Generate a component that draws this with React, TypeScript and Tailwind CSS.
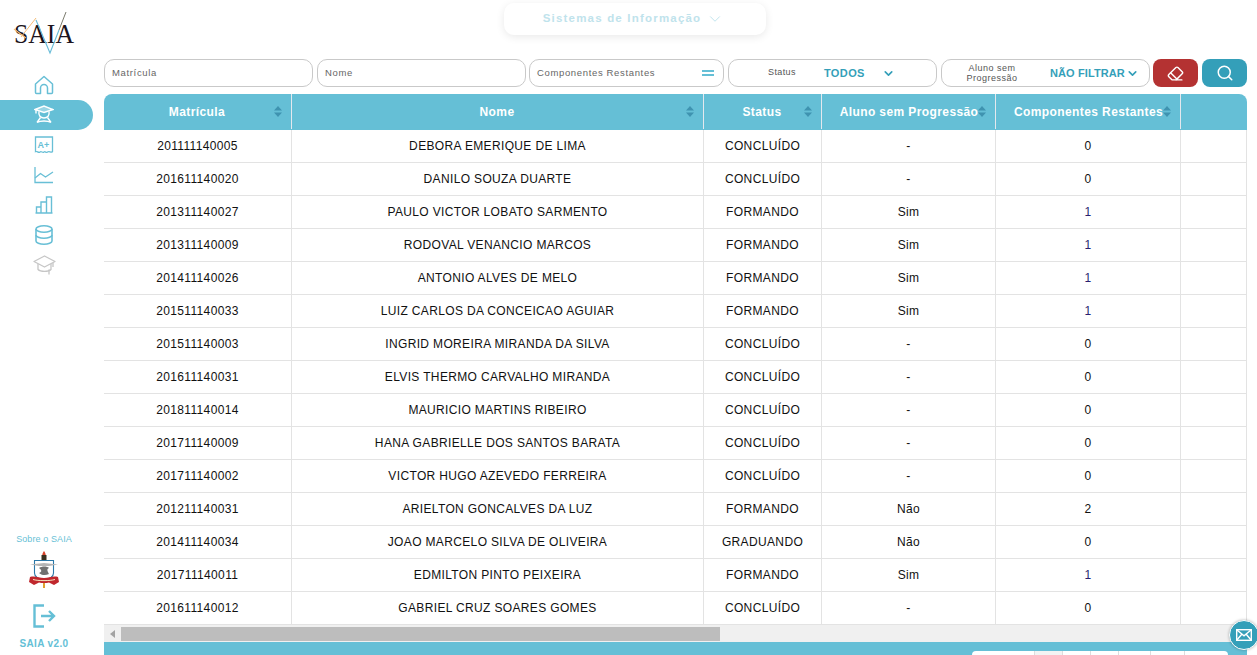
import { ChevronDown, Eraser, Search } from "lucide-react";

interface Student {
  matricula: string;
  nome: string;
  status: string;
  semProgressao: string;
  restantes: number;
}

const students: Student[] = [
  { matricula: "201111140005", nome: "DEBORA EMERIQUE DE LIMA", status: "CONCLUÍDO", semProgressao: "-", restantes: 0 },
  { matricula: "201611140020", nome: "DANILO SOUZA DUARTE", status: "CONCLUÍDO", semProgressao: "-", restantes: 0 },
  { matricula: "201311140027", nome: "PAULO VICTOR LOBATO SARMENTO", status: "FORMANDO", semProgressao: "Sim", restantes: 1 },
  { matricula: "201311140009", nome: "RODOVAL VENANCIO MARCOS", status: "FORMANDO", semProgressao: "Sim", restantes: 1 },
  { matricula: "201411140026", nome: "ANTONIO ALVES DE MELO", status: "FORMANDO", semProgressao: "Sim", restantes: 1 },
  { matricula: "201511140033", nome: "LUIZ CARLOS DA CONCEICAO AGUIAR", status: "FORMANDO", semProgressao: "Sim", restantes: 1 },
  { matricula: "201511140003", nome: "INGRID MOREIRA MIRANDA DA SILVA", status: "CONCLUÍDO", semProgressao: "-", restantes: 0 },
  { matricula: "201611140031", nome: "ELVIS THERMO CARVALHO MIRANDA", status: "CONCLUÍDO", semProgressao: "-", restantes: 0 },
  { matricula: "201811140014", nome: "MAURICIO MARTINS RIBEIRO", status: "CONCLUÍDO", semProgressao: "-", restantes: 0 },
  { matricula: "201711140009", nome: "HANA GABRIELLE DOS SANTOS BARATA", status: "CONCLUÍDO", semProgressao: "-", restantes: 0 },
  { matricula: "201711140002", nome: "VICTOR HUGO AZEVEDO FERREIRA", status: "CONCLUÍDO", semProgressao: "-", restantes: 0 },
  { matricula: "201211140031", nome: "ARIELTON GONCALVES DA LUZ", status: "FORMANDO", semProgressao: "Não", restantes: 2 },
  { matricula: "201411140034", nome: "JOAO MARCELO SILVA DE OLIVEIRA", status: "GRADUANDO", semProgressao: "Não", restantes: 0 },
  { matricula: "201711140011", nome: "EDMILTON PINTO PEIXEIRA", status: "FORMANDO", semProgressao: "Sim", restantes: 1 },
  { matricula: "201611140012", nome: "GABRIEL CRUZ SOARES GOMES", status: "CONCLUÍDO", semProgressao: "-", restantes: 0 },
];

const gridCols = "grid grid-cols-[188px_412px_118px_174px_185px_66px]";

function SortIcon() {
  return (
    <svg width="8" height="11" viewBox="0 0 8 11" className="shrink-0" fill="#3f93b0">
      <path d="M4 0 8 4.5H0Z" />
      <path d="M4 11 0 6.5H8Z" />
    </svg>
  );
}

function Logo() {
  return (
    <svg width="70" height="46" viewBox="0 0 70 46">
      <text x="3" y="33" fontFamily="Liberation Serif, serif" fontSize="27" fill="#1c1420" textLength="60" lengthAdjust="spacingAndGlyphs">
        SAIA
      </text>
      <path d="M3 19 15 28" stroke="#f5bd78" strokeWidth="1.2" />
      <path d="M10 27 25 8" stroke="#f5bd78" strokeWidth="1" />
      <path d="M25 10 39 43 48 20" stroke="#68bcd8" strokeWidth="1.1" fill="none" />
      <path d="M48 20 55 2" stroke="#6b6b5c" strokeWidth="0.9" />
    </svg>
  );
}

function HouseIcon() {
  return (
    <svg width="20" height="20" viewBox="0 0 20 20" fill="none" stroke="#68bfd6" strokeWidth="1.5" strokeLinejoin="round">
      <path d="M1.5 9 10 1.5 18.5 9V17.5A1 1 0 0 1 17.5 18.5H13.5V13A3.5 3.5 0 0 0 6.5 13V18.5H2.5A1 1 0 0 1 1.5 17.5Z" />
    </svg>
  );
}

function StudentIcon() {
  return (
    <svg width="20" height="20" viewBox="0 0 20 20" fill="none" stroke="#fff" strokeWidth="1.4">
      <path d="M1 4.5 10 1 19 4.5 10 7.5Z" fill="#fff" fillOpacity="0.35" />
      <path d="M2 5V8.5" />
      <path d="M5 6.5C4.2 10.5 6.5 13 10 13S15.8 10.5 15 6.5" />
      <path d="M6.5 12.5 3 17.5M13.5 12.5 17 17.5M3 17.5C6.5 15.5 13.5 15.5 17 17.5" />
    </svg>
  );
}

function GradeIcon() {
  return (
    <svg width="20" height="18" viewBox="0 0 20 18" fill="none" stroke="#68bfd6" strokeWidth="1.3">
      <path d="M1.5 15.5V1H18.5V15.5C17 17.5 15.5 14.5 13.5 16S11.5 14.5 10 16 7.5 14.5 6 16 3 14.5 1.5 15.5Z" />
      <text x="3.5" y="11.5" fontFamily="Liberation Sans, sans-serif" fontSize="9" fontWeight="700" fill="#68bfd6" stroke="none">
        A+
      </text>
    </svg>
  );
}

function LineChartIcon() {
  return (
    <svg width="20" height="18" viewBox="0 0 20 18" fill="none" stroke="#68bfd6" strokeWidth="1.3">
      <path d="M1 1V16.5H19" />
      <path d="M1 12 6.5 7.5 11.5 11 19 6" />
    </svg>
  );
}

function BarsIcon() {
  return (
    <svg width="18" height="18" viewBox="0 0 18 18" fill="none" stroke="#68bfd6" strokeWidth="1.4">
      <path d="M0.5 17H17.5M1.5 17V11H6V17M6 17V6H11.5V17M11.5 17V1H16.5V17" />
    </svg>
  );
}

function DatabaseIcon() {
  return (
    <svg width="18" height="20" viewBox="0 0 18 20" fill="none" stroke="#68bfd6" strokeWidth="1.6">
      <ellipse cx="9" cy="4" rx="8" ry="3.2" />
      <path d="M1 4V16C1 17.8 4.6 19.2 9 19.2S17 17.8 17 16V4" />
      <path d="M1 10C1 11.8 4.6 13.2 9 13.2S17 11.8 17 10" />
    </svg>
  );
}

function CapIcon() {
  return (
    <svg width="23" height="20" viewBox="0 0 23 20" fill="none" stroke="#c6c6c6" strokeWidth="1.3" strokeLinejoin="round">
      <path d="M1 6.5 11.5 1 22 6.5 11.5 12Z" />
      <path d="M5 9V14.5C7.5 17 15.5 17 18 14.5V9" />
      <path d="M20 8V12M16 14.5V19.5" />
    </svg>
  );
}

function Crest() {
  return (
    <svg width="30" height="37" viewBox="0 0 30 37">
      <path d="M15 0C13 3 12.5 5 15 8 17.5 5 17 3 15 0Z" fill="#d8432a" />
      <rect x="12.5" y="4" width="5" height="6" fill="#3a3020" />
      <rect x="14" y="32" width="2" height="5" fill="#e0a030" />
      <path d="M5.5 9.5H24.5V22C24.5 26 20 28 15 29 10 28 5.5 26 5.5 22Z" fill="#fff" stroke="#2b78a8" strokeWidth="1.1" />
      <path d="M1 13.5 15 12 29 13.5 20 15H10Z" fill="#b4b4b4" />
      <path d="M10 17C13 15 18 15 20 17 17 18 19 21 20 23 16 25 12 24 10 22 13 21 13 19 10 17Z" fill="#707070" />
      <path d="M1 26C6 24.5 10 27 15 27S24 24.5 29 26L30 31 25 34 20 31.5C17 32.2 13 32.2 10 31.5L5 34 0 31Z" fill="#c0272d" />
      <path d="M4 28.5C9 30 21 30 26 28.5" stroke="#f6e6c0" strokeWidth="1" fill="none" />
    </svg>
  );
}

function Sidebar() {
  return (
    <aside className="w-[104px] h-[655px] shrink-0 flex flex-col bg-white">
      <div className="h-[70px] pt-[10px] pl-[11px]">
        <Logo />
      </div>
      <nav className="flex flex-col">
        <div className="h-[30px] w-[93px] flex items-center justify-center pr-[5px]">
          <HouseIcon />
        </div>
        <div className="h-[30px] w-[93px] flex items-center justify-center pr-[5px] bg-[#65bfd6] rounded-r-[15px]">
          <StudentIcon />
        </div>
        <div className="h-[30px] w-[93px] flex items-center justify-center pr-[5px]">
          <GradeIcon />
        </div>
        <div className="h-[30px] w-[93px] flex items-center justify-center pr-[5px]">
          <LineChartIcon />
        </div>
        <div className="h-[30px] w-[93px] flex items-center justify-center pr-[5px]">
          <BarsIcon />
        </div>
        <div className="h-[30px] w-[93px] flex items-center justify-center pr-[5px]">
          <DatabaseIcon />
        </div>
        <div className="h-[30px] w-[93px] flex items-center justify-center pr-[5px]">
          <CapIcon />
        </div>
      </nav>
      <div className="mt-auto flex flex-col items-center pr-[16px]">
        <span className="text-[9px] tracking-[0.1px] text-[#68bfd6]">Sobre o SAIA</span>
        <div className="mt-[5px]">
          <Crest />
        </div>
        <svg width="24" height="24" viewBox="0 0 24 24" fill="none" stroke="#65bfd6" strokeWidth="2.4" className="mt-[16px]">
          <path d="M12 1.5H2.5V22.5H12" />
          <path d="M9 12H22M17 7 22 12 17 17" />
        </svg>
        <span className="mt-[8px] mb-[4px] text-[10px] font-bold tracking-[0.35px] text-[#65bfd6]">SAIA v2.0</span>
      </div>
    </aside>
  );
}

function TextFilter({ label, width, equals }: { label: string; width: string; equals?: boolean }) {
  return (
    <div className={`${width} h-[28px] flex items-center justify-between pl-[7px] pr-[8px] bg-white border border-[#c9c9c9] rounded-[10px]`}>
      <span className="text-[9.5px] tracking-[0.65px] text-[#666]">{label}</span>
      {equals && (
        <span className="flex flex-col gap-[2px] mr-[1px]">
          <span className="block w-[12px] h-[2px] bg-[#65bfd6]" />
          <span className="block w-[12px] h-[2px] bg-[#65bfd6]" />
        </span>
      )}
    </div>
  );
}

function Filters() {
  return (
    <div className="flex h-[28px] mt-[24px]">
      <TextFilter label="Matrícula" width="w-[209px]" />
      <div className="w-[4px]" />
      <TextFilter label="Nome" width="w-[209px]" />
      <div className="w-[3px]" />
      <TextFilter label="Componentes Restantes" width="w-[195px]" equals />
      <div className="w-[4px]" />
      <div className="w-[209px] h-[28px] flex items-center pl-[39px] bg-white border border-[#c9c9c9] rounded-[10px]">
        <span className="text-[9px] tracking-[0.4px] text-[#555]">Status</span>
        <span className="ml-[28px] text-[11px] font-bold tracking-[0.4px] text-[#349fb9]">TODOS</span>
        <ChevronDown size={13} strokeWidth={3} color="#349fb9" className="ml-[17px]" />
      </div>
      <div className="w-[4px]" />
      <div className="w-[209px] h-[28px] flex items-center pl-[22px] bg-white border border-[#c9c9c9] rounded-[10px]">
        <span className="w-[56px] text-center text-[9px] leading-[10px] tracking-[0.5px] text-[#555]">Aluno sem Progressão</span>
        <span className="ml-[30px] text-[11px] font-bold tracking-[0.1px] text-[#349fb9] whitespace-nowrap">NÃO FILTRAR</span>
        <ChevronDown size={13} strokeWidth={3} color="#349fb9" className="ml-[1px]" />
      </div>
      <div className="w-[3px]" />
      <button className="w-[45px] h-[28px] flex items-center justify-center bg-[#b43232] rounded-[8px]">
        <Eraser size={17} strokeWidth={2} color="#fff" />
      </button>
      <div className="w-[4px]" />
      <button className="w-[45px] h-[28px] flex items-center justify-center bg-[#349fb9] rounded-[8px]">
        <Search size={18} strokeWidth={2} color="#fff" />
      </button>
    </div>
  );
}

function HeaderCell({ label, tight }: { label: string; tight?: boolean }) {
  return (
    <div className="relative flex items-center justify-center border-r border-[#e4e8ee] text-[12px] font-bold tracking-[0.4px] text-white">
      {tight ? (
        <span className="flex items-center whitespace-nowrap pl-[9px]">
          {label}
          <SortIcon />
        </span>
      ) : (
        <>
          <span className="pr-[1px]">{label}</span>
          <span className="absolute right-[9px] top-[12px]">
            <SortIcon />
          </span>
        </>
      )}
    </div>
  );
}

function StudentsTable() {
  return (
    <div className="mt-[7px] w-[1143px]">
      <div className={`${gridCols} h-[36px] bg-[#65bfd6] rounded-t-[8px] border-b border-[#65bfd6]`}>
        <HeaderCell label="Matrícula" />
        <HeaderCell label="Nome" />
        <HeaderCell label="Status" />
        <HeaderCell label="Aluno sem Progressão" tight />
        <HeaderCell label="Componentes Restantes" tight />
        <div />
      </div>
      {students.map((s) => (
        <div key={s.matricula} className={`${gridCols} h-[33px] border-b border-[#e3e3e3] text-[12px] tracking-[0.35px] text-[#111]`}>
          <div className="flex items-center justify-center border-r border-[#e3e3e3]">{s.matricula}</div>
          <div className="flex items-center justify-center border-r border-[#e3e3e3]">{s.nome}</div>
          <div className="flex items-center justify-center border-r border-[#e3e3e3]">{s.status}</div>
          <div className="flex items-center justify-center border-r border-[#e3e3e3]">{s.semProgressao}</div>
          <div className={`flex items-center justify-center border-r border-[#e3e3e3] ${s.restantes === 1 ? "text-[#2a1f70]" : ""}`}>{s.restantes}</div>
          <div className="border-r border-[#e3e3e3]" />
        </div>
      ))}
    </div>
  );
}

export default function App() {
  return (
    <div className="relative flex w-[1257px] h-[655px] overflow-hidden bg-white font-['Liberation_Sans',Arial,sans-serif]">
      <Sidebar />
      <main className="w-[1143px] flex flex-col">
        <div className="flex pt-[3px] pl-[400px]">
          <div className="w-[262px] h-[32px] flex items-center justify-center gap-[5px] pr-[3px] bg-white rounded-[10px] shadow-[0_2px_8px_rgba(0,0,0,0.09)]">
            <span className="text-[11.5px] font-bold tracking-[1.2px] text-[#bfe3ec]">Sistemas de Informação</span>
            <ChevronDown size={18} strokeWidth={1.3} color="#bfe3ec" />
          </div>
        </div>
        <Filters />
        <StudentsTable />
        <div className="h-[17px] flex items-center bg-[#f0f0f0]">
          <span className="w-[17px] flex justify-center">
            <svg width="5" height="8" viewBox="0 0 5 8" fill="#a3a3a3">
              <path d="M5 0V8L0 4Z" />
            </svg>
          </span>
          <div className="w-[599px] h-[14px] bg-[#bdbdbd]" />
        </div>
        <div className="h-[13px] bg-[#65bfd6] flex justify-end items-end pr-[19px]">
          <div className="w-[256px] h-[4px] flex bg-white rounded-t-[5px]">
            <div className="w-[63px] border-r border-[#dddddd]" />
            <div className="w-[28px] border-r border-[#dddddd] bg-[#f3f3f3]" />
            <div className="w-[28px] border-r border-[#dddddd]" />
            <div className="w-[28px] border-r border-[#dddddd]" />
            <div className="w-[32px] border-r border-[#dddddd]" />
            <div className="w-[34px] border-r border-[#dddddd]" />
          </div>
        </div>
      </main>
      <button className="absolute left-[1229px] top-[620px] w-[30px] h-[30px] flex items-center justify-center bg-[#349fb9] border border-white rounded-full shadow-[0_0_3px_rgba(0,0,0,0.3)]">
        <svg width="16" height="12" viewBox="0 0 16 12" fill="none" stroke="#fff" strokeWidth="1.4">
          <rect x="0.7" y="0.7" width="14.6" height="10.6" />
          <path d="M0.7 0.7 8 6.8 15.3 0.7M0.7 11.3 6 5M15.3 11.3 10 5" />
        </svg>
      </button>
    </div>
  );
}
